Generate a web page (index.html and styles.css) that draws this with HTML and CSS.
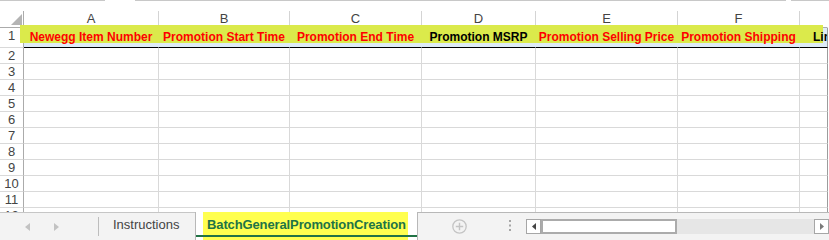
FILE: index.html
```html
<!DOCTYPE html>
<html>
<head>
<meta charset="utf-8">
<title>Sheet</title>
<link rel="stylesheet" href="styles.css">
</head>
<body>
<div class="app">
  <div class="topbar"><span class="seg s1"></span><span class="seg s2"></span><span class="seg s3"></span></div>
  <div class="sheet">
    <div class="grid">
      <div class="corner"><svg width="23" height="16" viewBox="0 0 23 16"><polygon points="22,3 22,14 11,14" fill="#b4b4b4"/></svg></div>
      <div class="ch">A</div>
      <div class="ch">B</div>
      <div class="ch">C</div>
      <div class="ch">D</div>
      <div class="ch">E</div>
      <div class="ch">F</div>
      <div class="ch last"></div>

      <div class="rh">1</div>
      <div class="r1"><span>Newegg Item Number</span></div>
      <div class="r1"><span>Promotion Start Time</span></div>
      <div class="r1"><span>Promotion End Time</span></div>
      <div class="r1 dark"><span>Promotion MSRP</span></div>
      <div class="r1"><span>Promotion Selling Price</span></div>
      <div class="r1"><span>Promotion Shipping</span></div>
      <div class="r1 dark g"><span>Limit Quantity</span></div>

      <div class="rh">2</div><div class="c"></div><div class="c"></div><div class="c"></div><div class="c"></div><div class="c"></div><div class="c"></div><div class="c g"></div>
      <div class="rh">3</div><div class="c"></div><div class="c"></div><div class="c"></div><div class="c"></div><div class="c"></div><div class="c"></div><div class="c g"></div>
      <div class="rh">4</div><div class="c"></div><div class="c"></div><div class="c"></div><div class="c"></div><div class="c"></div><div class="c"></div><div class="c g"></div>
      <div class="rh">5</div><div class="c"></div><div class="c"></div><div class="c"></div><div class="c"></div><div class="c"></div><div class="c"></div><div class="c g"></div>
      <div class="rh">6</div><div class="c"></div><div class="c"></div><div class="c"></div><div class="c"></div><div class="c"></div><div class="c"></div><div class="c g"></div>
      <div class="rh">7</div><div class="c"></div><div class="c"></div><div class="c"></div><div class="c"></div><div class="c"></div><div class="c"></div><div class="c g"></div>
      <div class="rh">8</div><div class="c"></div><div class="c"></div><div class="c"></div><div class="c"></div><div class="c"></div><div class="c"></div><div class="c g"></div>
      <div class="rh">9</div><div class="c"></div><div class="c"></div><div class="c"></div><div class="c"></div><div class="c"></div><div class="c"></div><div class="c g"></div>
      <div class="rh">10</div><div class="c"></div><div class="c"></div><div class="c"></div><div class="c"></div><div class="c"></div><div class="c"></div><div class="c g"></div>
      <div class="rh">11</div><div class="c"></div><div class="c"></div><div class="c"></div><div class="c"></div><div class="c"></div><div class="c"></div><div class="c g"></div>
      <div class="rh">12</div><div class="c"></div><div class="c"></div><div class="c"></div><div class="c"></div><div class="c"></div><div class="c"></div><div class="c g"></div>
    </div>
  </div>
  <div class="hl"></div>
  <div class="tabbar">
    <div class="nav">
      <svg class="arr al" width="5" height="8" viewBox="0 0 5 8"><polygon points="5,0 5,8 0,4" fill="#c2c2c2"/></svg>
      <svg class="arr ar" width="5" height="8" viewBox="0 0 5 8"><polygon points="0,0 0,8 5,4" fill="#c2c2c2"/></svg>
      <span class="sep"></span>
    </div>
    <div class="tab">Instructions</div>
    <div class="tab active"><span class="mark">BatchGeneralPromotionCreation</span></div>
    <div class="rest">
      <svg class="add" width="15" height="15" viewBox="0 0 15 15"><circle cx="7.5" cy="7.5" r="6.7" fill="none" stroke="#c4c4c4" stroke-width="1.3"/><path d="M7.5 3.8v7.4M3.8 7.5h7.4" stroke="#c4c4c4" stroke-width="1.4"/></svg>
      <svg class="dots" width="2" height="11" viewBox="0 0 2 11"><rect x="0" y="0" width="2" height="2" fill="#a6a6a6"/><rect x="0" y="4.5" width="2" height="2" fill="#a6a6a6"/><rect x="0" y="9" width="2" height="2" fill="#a6a6a6"/></svg>
      <div class="hscroll">
        <span class="sbtn"><svg width="4" height="7" viewBox="0 0 4 7"><polygon points="4,0 4,7 0,3.5" fill="#444"/></svg></span>
        <span class="thumb"></span>
        <span class="track"></span>
        <span class="sbtn"><svg width="4" height="7" viewBox="0 0 4 7"><polygon points="0,0 0,7 4,3.5" fill="#7a7a7a"/></svg></span>
      </div>
    </div>
  </div>
</div>
</body>
</html>
```

FILE: styles.css
```css
* { box-sizing: border-box; margin: 0; padding: 0; }
body {
  width: 829px;
  height: 240px;
  overflow: hidden;
  background: #fff;
  font-family: "Liberation Sans", Arial, sans-serif;
}
.app {
  position: relative;
  width: 829px;
  height: 240px;
  display: flex;
  flex-direction: column;
}
.topbar { height: 11px; display: flex; flex: none; }
.seg { height: 1px; background: #c8c8c8; }
.s1 { width: 105px; }
.s2 { width: 651px; margin-left: 30px; }
.s3 { flex: 1; margin-left: 5px; }

.sheet { height: 201px; overflow: hidden; flex: none; }
.grid {
  display: grid;
  width: 828px;
  grid-template-columns: 24px 135px 131px 132px 114px 142px 122px 28px;
  grid-template-rows: 17px 20px repeat(11, 16px);
}
.corner { border-right: 1px solid #ababab; border-bottom: 1px solid #ababab; }
.corner svg { display: block; }
.ch {
  border-right: 1px solid #d4d4d4;
  border-bottom: 1px solid #ababab;
  font-size: 13px;
  line-height: 16px;
  color: #444;
  text-align: center;
}
.ch.last { border-right-color: transparent; }
.rh {
  border-right: 1px solid #ababab;
  border-bottom: 1px solid #d9d9d9;
  font-size: 13px;
  line-height: 16px;
  color: #444;
  text-align: center;
}
.c { border-right: 1px solid #d9d9d9; border-bottom: 1px solid #d9d9d9; }
.c.g { border-right-color: #9c9c9c; }
.r1 {
  background: #ddebf7;
  border-right: 1px solid transparent;
  border-bottom: 1px solid #000;
  font-weight: bold;
  font-size: 12px;
  line-height: 18px;
  color: #ff0000;
  text-align: center;
  white-space: nowrap;
  overflow: hidden;
}
.r1 span { position: relative; z-index: 2; }
.r1.dark { color: #000; }
.r1.g { text-align: left; padding-left: 13px; border-right-color: #9c9c9c; }

.hl {
  position: absolute;
  left: 20px;
  top: 25px;
  width: 803px;
  height: 18px;
  background: #dbea4b;
  z-index: 1;
}

.tabbar {
  height: 28px;
  flex: none;
  display: flex;
  background: #f3f3f3;
  font-size: 13px;
  color: #444;
}
.nav {
  width: 99px;
  display: flex;
  align-items: center;
  border-top: 1px solid #c6c6c6;
}
.arr { display: block; }
.al { margin-left: 25px; }
.ar { margin-left: 24px; }
.sep {
  margin-left: auto;
  align-self: flex-start;
  margin-top: 4px;
  width: 1px;
  height: 19px;
  background: #bdbdbd;
}
.tab {
  width: 96px;
  border-top: 1px solid #c6c6c6;
  padding-left: 14px;
  line-height: 24px;
  white-space: nowrap;
}
.tab.active {
  width: 223px;
  border-top: none;
  border-left: 1px solid #b8b8b8;
  border-right: 1px solid #b8b8b8;
  padding: 0 9px 0 7px;
  background: linear-gradient(to bottom, transparent 23px, #217346 23px, #217346 25px, transparent 25px), #fff;
}
.mark {
  display: block;
  height: 28px;
  padding-left: 4px;
  line-height: 25px;
  font-weight: bold;
  color: #217346;
  letter-spacing: -0.12px;
  background: linear-gradient(to bottom, transparent 23px, #217346 23px, #217346 25px, transparent 25px), #ffff4f;
}
.rest {
  flex: 1;
  display: flex;
  align-items: flex-start;
  border-top: 1px solid #b8b8b8;
}
.add { display: block; margin-left: 34px; margin-top: 6px; }
.dots { display: block; margin-left: 42px; margin-top: 7px; }
.hscroll { display: flex; margin-left: 15px; margin-top: 6px; height: 15px; }
.sbtn {
  width: 15px;
  height: 15px;
  background: #fff;
  border: 1px solid #a6a6a6;
  display: flex;
  align-items: center;
  justify-content: center;
}
.sbtn svg { display: block; }
.thumb {
  width: 136px;
  height: 15px;
  background: #fff;
  border: 2px solid #ababab;
}
.track { width: 137px; height: 15px; background: #e6e6e6; }
```
